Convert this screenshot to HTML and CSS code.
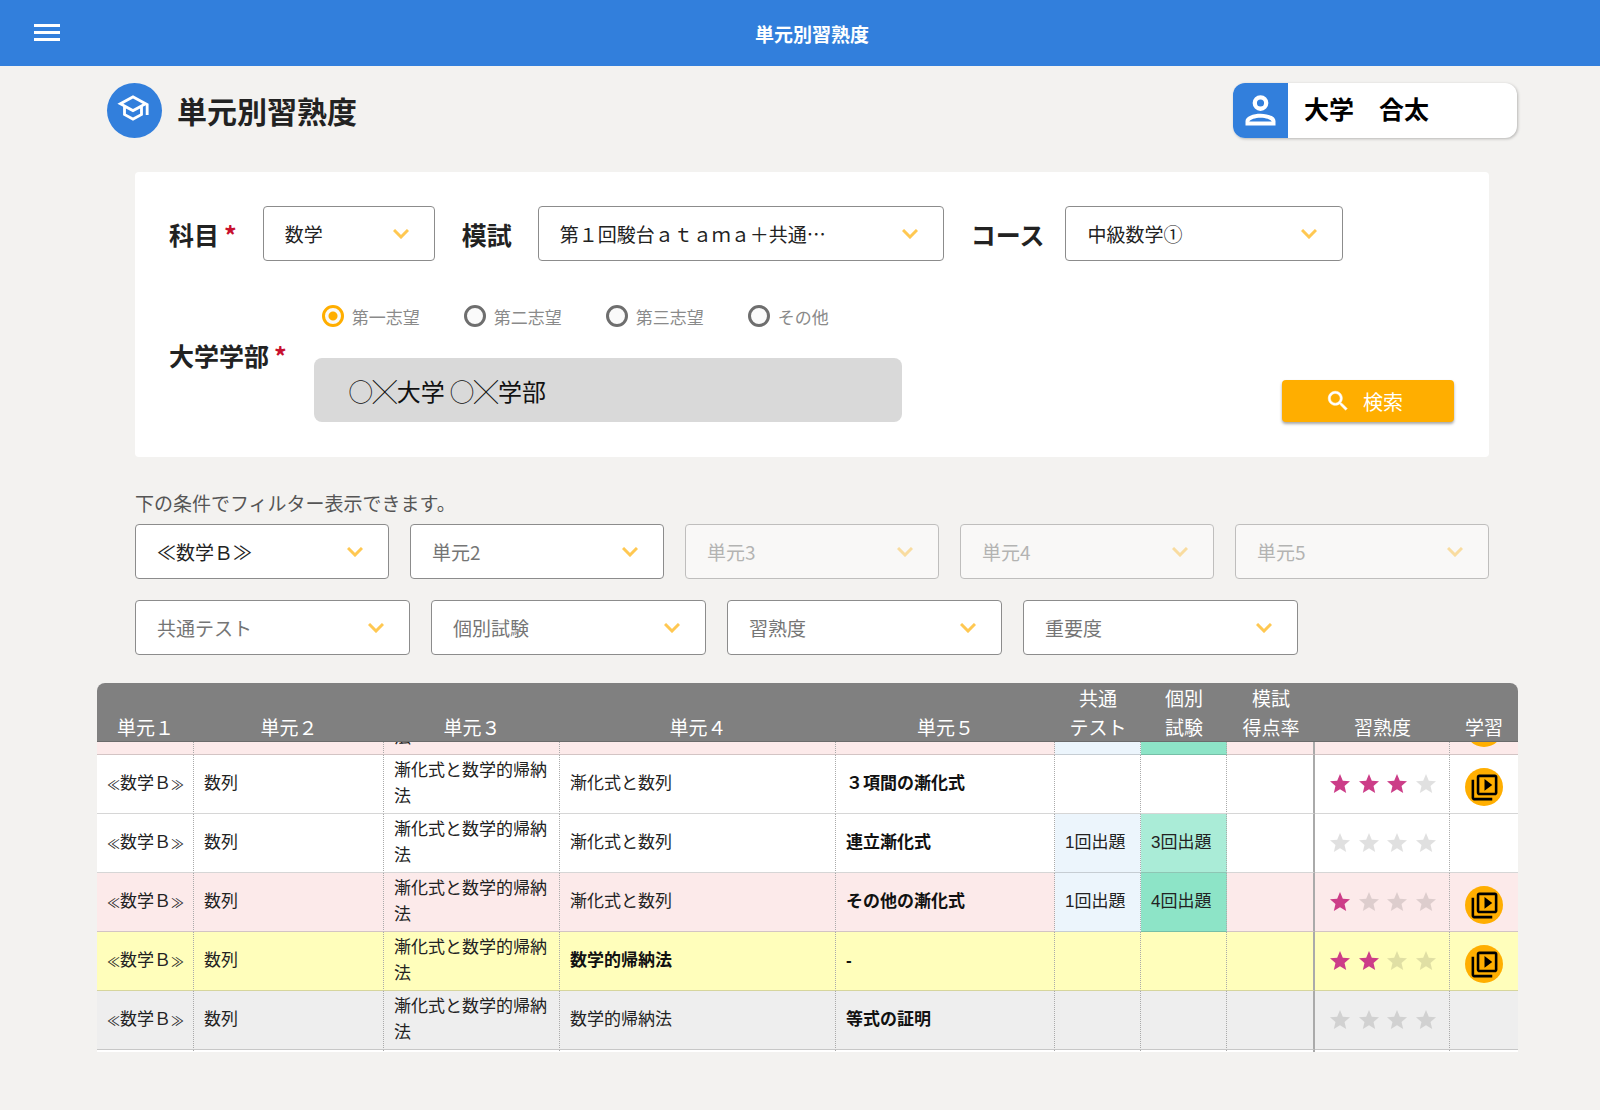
FILE: index.html
```html
<!DOCTYPE html>
<html lang="ja">
<head>
<meta charset="utf-8">
<meta name="viewport" content="width=device-width, initial-scale=1">
<title>単元別習熟度</title>
<link rel="stylesheet" href="styles.css">
</head>
<body>
<svg class="sprite" aria-hidden="true">
  <symbol id="star" viewBox="0 0 24 24"><path d="M12 17.27 18.18 21l-1.64-7.03L22 9.24l-7.19-.61L12 2 9.19 8.63 2 9.24l5.46 4.73L5.82 21z"/></symbol>
  <symbol id="video" viewBox="0 0 24 24"><path d="M4 6H2v14c0 1.1.9 2 2 2h14v-2H4V6zm16-4H8c-1.100 0-2 .9-2 2v12c0 1.100.9 2 2 2h12c1.100 0 2-.9 2-2V4c0-1.100-.9-2-2-2zm0 14H8V4h12v12zM12 5.500v9l6-4.500z"/></symbol>
</svg>

<header class="appbar">
  <button class="appbar__menu" type="button" aria-label="メニュー">
    <svg viewBox="0 0 26 18" width="26" height="18"><path d="M0 0h26v3H0zM0 7h26v3H0zM0 14h26v3H0z" fill="#fff"/></svg>
  </button>
  <div class="appbar__title">単元別習熟度</div>
</header>

<main class="page">
  <div class="page__head">
    <span class="page__icon">
      <svg viewBox="0 0 24 24" width="34" height="34"><path fill="#fff" d="M12 3 1 9l4 2.180v6L12 21l7-3.820v-6l2-1.090V17h2V9L12 3zm6.820 6L12 12.720 5.180 9 12 5.280 18.820 9zM17 15.990l-5 2.730-5-2.730v-3.720L12 15l5-2.730v3.720z"/></svg>
    </span>
    <h1 class="page__title">単元別習熟度</h1>
    <div class="user">
      <span class="user__icon">
        <svg viewBox="0 0 24 24" width="45" height="45"><path fill="#fff" fill-rule="evenodd" d="M12 3.800a4.200 4.200 0 1 1 0 8.400 4.200 4.200 0 0 1 0-8.400zm0 2.300a1.900 1.900 0 1 0 0 3.800 1.900 1.900 0 0 0 0-3.800zM12 13.700c3.800 0 8 1.400 8 3.900V20H4v-2.400c0-2.500 4.200-3.900 8-3.900zm0 2.200c-2.900 0-5.400.9-6 2h12c-.6-1.100-3.100-2-6-2z"/></svg>
      </span>
      <span class="user__name">大学　合太</span>
    </div>
  </div>

  <form class="card">
    <div class="card__row">
      <div class="field">
        <label class="label" for="subject">科目<span class="label__req">*</span></label>
        <select class="select select--subject" id="subject"><option>数学</option></select>
      </div>
      <div class="field">
        <label class="label" for="exam">模試</label>
        <select class="select select--exam" id="exam"><option>第１回駿台ａｔａｍａ＋共通…</option></select>
      </div>
      <div class="field field--tight">
        <label class="label" for="course">コース</label>
        <select class="select select--course" id="course"><option>中級数学①</option></select>
      </div>
    </div>
    <div class="card__row">
      <div class="field field--grow">
        <label class="label" for="faculty">大学学部<span class="label__req">*</span></label>
        <div class="choice">
          <div class="choice__radios">
            <label class="radio"><input type="radio" name="wish" checked>第一志望</label>
            <label class="radio"><input type="radio" name="wish">第二志望</label>
            <label class="radio"><input type="radio" name="wish">第三志望</label>
            <label class="radio"><input type="radio" name="wish">その他</label>
          </div>
          <input class="choice__value" id="faculty" type="text" value="◯╳大学 ◯╳学部" readonly>
        </div>
      </div>
      <button class="search" type="button">
        <svg viewBox="0 0 24 24" width="26" height="26"><path fill="#fff" stroke="#fff" stroke-width=".5" d="M15.500 14h-.79l-.28-.27C15.410 12.590 16 11.110 16 9.500 16 5.910 13.090 3 9.500 3S3 5.910 3 9.500 5.910 16 9.500 16c1.610 0 3.090-.59 4.230-1.570l.27.28v.79l5 4.990L20.490 19l-4.990-5zm-6 0C7.010 14 5 11.990 5 9.500S7.010 5 9.500 5 14 7.010 14 9.500 11.990 14 9.500 14z"/></svg>
        検索
      </button>
    </div>
  </form>

  <section class="filters">
    <p class="filters__note">下の条件でフィルター表示できます。</p>
    <div class="filters__units">
      <select class="select" aria-label="単元1"><option>≪数学Ｂ≫</option></select>
      <select class="select select--empty" aria-label="単元2"><option>単元2</option></select>
      <select class="select select--empty" aria-label="単元3" disabled><option>単元3</option></select>
      <select class="select select--empty" aria-label="単元4" disabled><option>単元4</option></select>
      <select class="select select--empty" aria-label="単元5" disabled><option>単元5</option></select>
    </div>
    <div class="filters__others">
      <select class="select select--empty" aria-label="共通テスト"><option>共通テスト</option></select>
      <select class="select select--empty" aria-label="個別試験"><option>個別試験</option></select>
      <select class="select select--empty" aria-label="習熟度"><option>習熟度</option></select>
      <select class="select select--empty" aria-label="重要度"><option>重要度</option></select>
    </div>
  </section>

  <div class="results" id="results">
    <table class="table">
      <colgroup>
        <col class="col-u1"><col class="col-u2"><col class="col-u3"><col class="col-u4"><col class="col-u5">
        <col class="col-count"><col class="col-count"><col class="col-rate"><col class="col-level"><col class="col-study">
      </colgroup>
      <thead>
        <tr>
          <th scope="col">単元１</th><th scope="col">単元２</th><th scope="col">単元３</th><th scope="col">単元４</th><th scope="col">単元５</th>
          <th scope="col">共通<br>テスト</th><th scope="col">個別<br>試験</th><th scope="col">模試<br>得点率</th><th scope="col">習熟度</th><th scope="col">学習</th>
        </tr>
      </thead>
      <tbody>
        <tr class="row--pink">
          <td></td><td></td><td>漸化式と数学的帰納法</td><td></td><td></td>
          <td class="count--1"></td><td class="count--4"></td><td class="rate"></td><td></td>
          <td class="study"><button class="study__btn" type="button" aria-label="学習"><svg><use href="#video"/></svg></button></td>
        </tr>
        <tr>
          <td><span class="mark">≪</span>数学Ｂ<span class="mark">≫</span></td><td>数列</td><td>漸化式と数学的帰納法</td><td>漸化式と数列</td><td class="target">３項間の漸化式</td>
          <td></td><td></td><td class="rate"></td>
          <td><div class="stars"><svg class="on"><use href="#star"/></svg><svg class="on"><use href="#star"/></svg><svg class="on"><use href="#star"/></svg><svg><use href="#star"/></svg></div></td>
          <td class="study"><button class="study__btn" type="button" aria-label="学習"><svg><use href="#video"/></svg></button></td>
        </tr>
        <tr>
          <td><span class="mark">≪</span>数学Ｂ<span class="mark">≫</span></td><td>数列</td><td>漸化式と数学的帰納法</td><td>漸化式と数列</td><td class="target">連立漸化式</td>
          <td class="count--1">1回出題</td><td class="count--3">3回出題</td><td class="rate"></td>
          <td><div class="stars"><svg><use href="#star"/></svg><svg><use href="#star"/></svg><svg><use href="#star"/></svg><svg><use href="#star"/></svg></div></td>
          <td></td>
        </tr>
        <tr class="row--pink">
          <td><span class="mark">≪</span>数学Ｂ<span class="mark">≫</span></td><td>数列</td><td>漸化式と数学的帰納法</td><td>漸化式と数列</td><td class="target">その他の漸化式</td>
          <td class="count--1">1回出題</td><td class="count--4">4回出題</td><td class="rate"></td>
          <td><div class="stars"><svg class="on"><use href="#star"/></svg><svg><use href="#star"/></svg><svg><use href="#star"/></svg><svg><use href="#star"/></svg></div></td>
          <td class="study"><button class="study__btn" type="button" aria-label="学習"><svg><use href="#video"/></svg></button></td>
        </tr>
        <tr class="row--yellow">
          <td><span class="mark">≪</span>数学Ｂ<span class="mark">≫</span></td><td>数列</td><td>漸化式と数学的帰納法</td><td class="target">数学的帰納法</td><td class="target">-</td>
          <td></td><td></td><td class="rate"></td>
          <td><div class="stars"><svg class="on"><use href="#star"/></svg><svg class="on"><use href="#star"/></svg><svg><use href="#star"/></svg><svg><use href="#star"/></svg></div></td>
          <td class="study"><button class="study__btn" type="button" aria-label="学習"><svg><use href="#video"/></svg></button></td>
        </tr>
        <tr class="row--gray">
          <td><span class="mark">≪</span>数学Ｂ<span class="mark">≫</span></td><td>数列</td><td>漸化式と数学的帰納法</td><td>数学的帰納法</td><td class="target">等式の証明</td>
          <td></td><td></td><td class="rate"></td>
          <td><div class="stars"><svg><use href="#star"/></svg><svg><use href="#star"/></svg><svg><use href="#star"/></svg><svg><use href="#star"/></svg></div></td>
          <td></td>
        </tr>
        <tr>
          <td></td><td></td><td></td><td></td><td></td><td></td><td></td><td class="rate"></td><td></td><td></td>
        </tr>
      </tbody>
    </table>
  </div>
</main>
<script src="script.js"></script>
</body>
</html>
```

FILE: styles.css
```css
*,
*::before,
*::after {
  box-sizing: border-box;
}

body {
  margin: 0;
  background: #f3f2f0;
  color: #222;
  font-family: "Noto Sans CJK JP", sans-serif;
  font-size: 19px;
}

button,
input,
select {
  font: inherit;
}

button {
  padding: 0;
  border: 0;
  cursor: pointer;
}

svg {
  display: block;
}

.sprite {
  display: none;
}

/* App bar */
.appbar {
  display: flex;
  align-items: center;
  height: 66px;
  padding: 0 36px 0 34px;
  background: #327fdc;
  color: #fff;
}

.appbar__menu {
  background: none;
}

.appbar__title {
  flex: 1;
  font-weight: 700;
  text-align: center;
}

/* Page heading */
.page {
  margin: 0 82px 0 97px;
  padding: 16px 0 56px;
}

.page__head {
  display: flex;
  align-items: center;
  padding: 0 1px 0 10px;
  margin-bottom: 34px;
}

.page__icon {
  display: flex;
  align-items: center;
  justify-content: center;
  width: 55px;
  height: 55px;
  padding: 0 4px 5px 0;
  border-radius: 50%;
  background: #327fdc;
}

.page__title {
  margin: 0 auto 0 15px;
  font-size: 30px;
  line-height: 56px;
  font-weight: 700;
}

.user {
  display: flex;
  width: 284px;
  height: 55px;
  overflow: hidden;
  border-radius: 12px;
  background: #fff;
  box-shadow: 1px 1px 3px rgba(0, 0, 0, 0.25);
}

.user__icon {
  display: flex;
  align-items: center;
  justify-content: center;
  width: 55px;
  background: #327fdc;
}

.user__name {
  padding-left: 16px;
  color: #000;
  font-size: 25px;
  line-height: 51px;
  font-weight: 700;
}

/* Search card */
.card {
  display: grid;
  gap: 34px;
  margin: 0 29px 0 38px;
  padding: 34px 35px 35px 34px;
  border-radius: 4px;
  background: #fff;
}

.card__row {
  display: flex;
  align-items: flex-end;
  gap: 27px;
}

.field {
  display: flex;
  align-items: center;
  gap: 26px;
}

.field--tight {
  gap: 21px;
}

.field--grow {
  flex: 1;
  gap: 27px;
}

.field--grow > .label {
  padding-bottom: 8px;
}

.label {
  display: flex;
  gap: 5px;
  font-size: 25px;
  line-height: 38px;
  font-weight: 700;
  white-space: nowrap;
}

.label__req {
  color: #c8102e;
}

.select {
  width: 100%;
  height: 55px;
  padding: 0 50px 0 21px;
  appearance: none;
  border: 1px solid #8c8c8c;
  border-radius: 4px;
  background: #fff url("data:image/svg+xml,%3Csvg xmlns='http://www.w3.org/2000/svg' width='16' height='10' viewBox='0 0 16 10'%3E%3Cpath d='M1 1l7 7 7-7' fill='none' stroke='%23ffc852' stroke-width='3'/%3E%3C/svg%3E") no-repeat right 25px center;
  color: #222;
}

.select--subject {
  width: 172px;
}

.select--exam {
  width: 406px;
}

.select--course {
  width: 278px;
}

.select--empty {
  color: #757575;
}

.select:disabled {
  opacity: 0.5;
}

.choice {
  flex: 1;
}

.choice__radios {
  display: flex;
  gap: 44px;
  padding: 10px 8px;
  margin-bottom: 21px;
}

.radio {
  display: flex;
  align-items: center;
  gap: 8px;
  height: 22px;
  color: #8a8a8a;
  font-size: 17px;
}

.radio input {
  width: 22px;
  height: 22px;
  margin: 0;
  appearance: none;
  border: 3px solid #6e6e6e;
  border-radius: 50%;
  background: #fafafa;
}

.radio input:checked {
  border-color: #ffae00;
  background: radial-gradient(circle, #ffae00 4px, #fafafa 5px);
}

.choice__value {
  display: block;
  width: 588px;
  max-width: 100%;
  height: 64px;
  padding: 0 35px;
  border: 0;
  border-radius: 8px;
  background: #d9d9d9;
  color: #111;
  font-size: 24px;
}

.search {
  display: flex;
  align-items: center;
  justify-content: center;
  gap: 12px;
  width: 172px;
  height: 42px;
  padding-right: 8px;
  border-radius: 4px;
  background: #ffae00;
  color: #fff;
  font-size: 20px;
  box-shadow: 0 2px 3px rgba(0, 0, 0, 0.35);
}

/* Filters */
.filters {
  margin: 31px 29px 28px 38px;
}

.filters__note {
  margin: 0 0 6px;
  color: #555;
  line-height: 30px;
}

.filters__units,
.filters__others {
  display: grid;
  grid-template-columns: repeat(5, 1fr);
  gap: 21px;
}

.filters__others {
  grid-template-columns: repeat(4, minmax(0, 275px));
  margin-top: 21px;
}

/* Results */
.results {
  max-height: 369px;
  overflow-y: auto;
  scrollbar-width: none;
  border-radius: 8px 8px 0 0;
}

.table {
  width: 100%;
  table-layout: fixed;
  border-spacing: 0;
  background: #fff;
}

.col-u1 { width: 97px; }
.col-u2 { width: 190px; }
.col-u3 { width: 176px; }
.col-u4 { width: 276px; }
.col-u5 { width: 219px; }
.col-count { width: 86px; }
.col-rate { width: 88px; }
.col-level { width: 135px; }
.col-study { width: 68px; }

.table th {
  position: sticky;
  top: 0;
  z-index: 1;
  height: 59px;
  padding: 0;
  border-bottom: 1px solid #6b6b6b;
  background: #808080;
  color: #fff;
  font-weight: 400;
  line-height: 29px;
  vertical-align: bottom;
}

.table td {
  height: 59px;
  padding: 0 10px;
  border-right: 1px dotted #aaa;
  border-bottom: 1px solid rgba(0, 0, 0, 0.16);
  font-family: "Liberation Sans", "Noto Sans CJK JP", sans-serif;
  font-size: 17px;
  line-height: 26px;
}

.table td:first-child {
  white-space: nowrap;
}

.table td:last-child {
  border-right: 0;
}

.table .rate {
  border-right: 2px solid #aaa;
}

.table .target {
  color: #111;
  font-weight: 700;
}

.mark {
  font-size: 13px;
  line-height: 1;
}

.row--pink { background: #fceaea; }
.row--yellow { background: #fffebb; }
.row--gray { background: #eee; }

.count--1 { background: #ecf5fc; }
.count--3 { background: #aaecd7; }
.count--4 { background: #8de4c7; }

.stars {
  display: flex;
  justify-content: space-between;
  padding: 0 1px 0 3px;
}

.stars svg {
  width: 24px;
  height: 24px;
  fill: rgba(0, 0, 0, 0.12);
}

.stars .on {
  fill: #cc3d88;
}

.table .study {
  padding: 6px 0 0;
}

.study__btn {
  display: flex;
  align-items: center;
  justify-content: center;
  width: 38px;
  height: 38px;
  margin: 0 auto;
  border-radius: 50%;
  background: #ffae00;
}

.study__btn svg {
  width: 31px;
  height: 31px;
}
```

FILE: script.js
```js
document.getElementById('results').scrollTop = 46;
```
